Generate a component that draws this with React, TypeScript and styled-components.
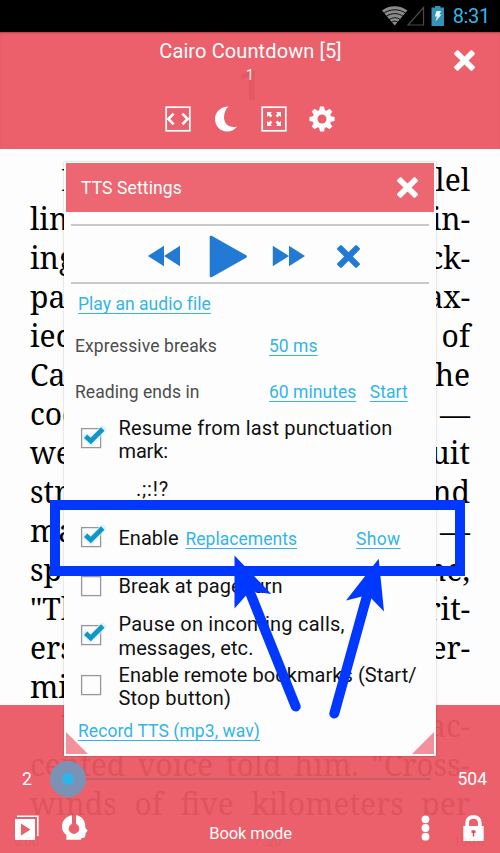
import React from 'react';
import styled, { createGlobalStyle } from 'styled-components';

const Global = createGlobalStyle`
  * { box-sizing: border-box; }
  body { margin: 0; background: #fdfdfd; font-family: Roboto, sans-serif; }
  svg { display: block; flex: none; }
`;

const Screen = styled.div`
  position: relative;
  width: 500px;
  height: 853px;
  overflow: hidden;
  background: #fdfdfd;
`;

/* ---------- status bar ---------- */

const StatusBar = styled.div`
  display: flex;
  align-items: center;
  justify-content: flex-end;
  height: 32px;
  padding-right: 10px;
  background: #000;
`;

const BatteryIcon = styled.svg`
  margin-left: 6px;
`;

const Clock = styled.span`
  margin-left: 8px;
  font-size: 20px;
  line-height: 32px;
  letter-spacing: -0.3px;
  color: #33b5e5;
`;

/* ---------- book page ---------- */

const Page = styled.main`
  display: flex;
  flex-direction: column;
  padding: 127.6px 30px 0;
  font-family: 'Noto Serif', 'DejaVu Serif Condensed', serif;
  font-size: 30px;
  color: #000;
`;

const Line = styled.div<{ $indent?: boolean }>`
  display: flex;
  flex: none;
  justify-content: space-between;
  height: 39px;
  line-height: 39px;
  padding-left: ${(p) => (p.$indent ? 31 : 0)}px;
  white-space: nowrap;
`;

/* ---------- reader bars ---------- */

const Bar = styled.section`
  position: absolute;
  left: 0;
  width: 500px;
  background: rgba(234, 87, 98, 0.95);
  color: #fff;
`;

const TopBar = styled(Bar)`
  top: 32px;
  height: 117px;
  display: grid;
  grid-template-columns: 70px 1fr 70px;
  box-shadow: inset 0 2px 2px -1px rgba(90, 20, 30, 0.4);
`;

const TitleColumn = styled.div`
  grid-column: 2;
  display: flex;
  flex-direction: column;
  align-items: center;
`;

const Title = styled.h1`
  margin: 7px 0 0 1px;
  font-size: 20px;
  font-weight: 400;
  line-height: 24px;
  letter-spacing: 0.115px;
`;

const Chapter = styled.div`
  position: relative;
  margin-top: 3px;
  font-size: 14px;
  line-height: 18px;
`;

const GhostChapter = styled.span`
  position: absolute;
  top: 0;
  left: -8px;
  font-size: 43px;
  font-weight: 700;
  line-height: 38px;
  color: rgba(150, 20, 40, 0.11);
`;

const ToolRow = styled.div`
  display: flex;
  justify-content: space-between;
  align-items: center;
  width: 171px;
  margin: 22px 0 0;
`;

const MoonIcon = styled.svg`
  margin: 0 -1px 0 1px;
`;

const FullscreenIcon = styled.svg`
  margin: 0 -1px 0 1px;
`;

const TopClose = styled.div`
  display: flex;
  justify-content: center;
  padding: 17.5px 1px 0 0;
`;

const BottomBar = styled(Bar)`
  top: 705px;
  height: 148px;
  display: flex;
  flex-direction: column;
  padding-top: 56px;
`;

const SliderRow = styled.div`
  display: flex;
  align-items: center;
  height: 36px;
  padding: 0 13px 0 22px;
  font-size: 17.5px;
  line-height: 20px;
`;

const Track = styled.div`
  display: flex;
  align-items: center;
  flex: 1;
  margin: 0 26px 0 18px;
`;

const Knob = styled.div`
  display: flex;
  align-items: center;
  justify-content: center;
  width: 36px;
  height: 36px;
  border-radius: 50%;
  background: #7c92b4;
  &::after {
    content: '';
    width: 12px;
    height: 12px;
    border-radius: 50%;
    background: #2fb4ea;
  }
`;

const Rail = styled.div`
  flex: 1;
  height: 1.5px;
  background: #c95b67;
`;

const BottomTools = styled.div`
  display: grid;
  grid-template-columns: 1fr auto 1fr;
  align-items: start;
  height: 30px;
  margin-top: 18px;
  padding: 0 16px 0 15px;
`;

const ToolGroup = styled.div<{ $end?: boolean; $gap: number }>`
  display: flex;
  align-items: center;
  gap: ${(p) => p.$gap}px;
  justify-content: ${(p) => (p.$end ? 'flex-end' : 'flex-start')};
`;

const Mode = styled.span`
  padding: 9px 0 0 2px;
  font-size: 16.5px;
  line-height: 20px;
  letter-spacing: -0.1px;
`;

const Footer = styled.div`
  position: absolute;
  left: 0;
  bottom: 4px;
  width: 500px;
  display: flex;
  justify-content: space-between;
  padding: 0 15px 0 14px;
  font-size: 13px;
  line-height: 15px;
  color: rgba(120, 20, 30, 0.09);
`;

const FooterGroup = styled.span`
  margin-left: 42px;
`;

/* ---------- dialog ---------- */

const Dialog = styled.section`
  position: absolute;
  left: 64px;
  top: 162px;
  width: 372px;
  height: 594px;
  display: flex;
  flex-direction: column;
  padding: 1px 2px 2px;
  background: #fdfdfd;
  box-shadow: 0 0 2px rgba(0, 0, 0, 0.25);
`;

const DialogHeader = styled.header`
  display: flex;
  align-items: center;
  justify-content: space-between;
  flex: none;
  height: 49px;
  padding: 0 16px 0 15px;
  background: #ec6772;
  color: #fff;
  font-size: 17.5px;
  letter-spacing: 0.12px;
`;

const Player = styled.div`
  display: flex;
  align-items: center;
  flex: none;
  height: 60px;
  margin: 12px 5px 0;
  padding: 4px 0 0 76px;
  border-top: 2px solid #cacaca;
  border-bottom: 2px solid #cacaca;
`;

const Spacer = styled.span<{ $w: number }>`
  width: ${(p) => p.$w}px;
`;

const Row = styled.div<{ $h: number; $left?: number }>`
  display: flex;
  align-items: center;
  flex: none;
  height: ${(p) => p.$h}px;
  padding-left: ${(p) => p.$left ?? 9}px;
  font-size: 17.5px;
  line-height: 20px;
`;

const Label = styled.span<{ $ls: number }>`
  width: 194px;
  color: #4c4c4c;
  letter-spacing: ${(p) => p.$ls}px;
`;

const Link = styled.a<{ $ls?: number; $ml?: number }>`
  margin-left: ${(p) => p.$ml ?? 0}px;
  color: #33b5e5;
  letter-spacing: ${(p) => p.$ls ?? 0.03}px;
  text-decoration: underline;
  text-decoration-thickness: 1px;
  text-underline-offset: 2.5px;
  text-decoration-skip-ink: none;
`;

const CheckRow = styled(Row)`
  padding-left: 14px;
  font-size: 20px;
  line-height: 23.5px;
  color: #111;
`;

const CheckText = styled.div`
  display: flex;
  flex-direction: column;
  margin-left: 11.5px;
`;

const TextLine = styled.span<{ $ls?: number }>`
  letter-spacing: ${(p) => p.$ls ?? 0}px;
  white-space: nowrap;
`;

const SmallLink = styled(Link)`
  padding-top: 3px;
  font-size: 17.5px;
`;

const CheckSvg = styled.svg<{ $dy: number }>`
  margin: 0 0 ${(p) => -2 * p.$dy}px;
`;

const Corner = styled.i<{ $right?: boolean }>`
  position: absolute;
  bottom: 2px;
  ${(p) => (p.$right ? 'right: 2px;' : 'left: 2px;')}
  width: 22px;
  height: 22px;
  background: #f3909a;
  clip-path: ${(p) => (p.$right ? 'polygon(100% 0, 100% 100%, 0 100%)' : 'polygon(0 0, 100% 100%, 0 100%)')};
`;

/* ---------- annotation ---------- */

const Highlight = styled.div`
  position: absolute;
  left: 50px;
  top: 500px;
  width: 415px;
  height: 76px;
  border: 10px solid #0038ff;
`;

const Arrows = styled.svg`
  position: absolute;
  left: 220px;
  top: 550px;
`;

/* ---------- icons ---------- */

function Cross({ size, color }: { size: number; color: string }) {
  return (
    <svg width={size} height={size} viewBox="-10 -10 20 20" fill={color}>
      <rect x="-12" y="-2.7" width="24" height="5.4" rx="1.1" transform="rotate(45)" />
      <rect x="-12" y="-2.7" width="24" height="5.4" rx="1.1" transform="rotate(-45)" />
    </svg>
  );
}

function Check({ on = false, dy = 0 }: { on?: boolean; dy?: number }) {
  return (
    <CheckSvg $dy={dy} width="27" height="26" viewBox="0 0 27 26">
      <rect x="1.6" y="3.6" width="19" height="19" fill="#fdfdfd" stroke="#989898" strokeWidth="1.3" />
      {on && (
        <>
          <path d="M6 12.2L10.8 16.8L22.5 4.4" fill="none" stroke="#c9ecf8" strokeWidth="7.5" opacity="0.6" strokeLinecap="round" strokeLinejoin="round" />
          <path d="M5.6 11.2L10.8 16L22.8 4" fill="none" stroke="#1296c6" strokeWidth="4.7" />
        </>
      )}
    </CheckSvg>
  );
}

const bookLines: { l: string; r?: string; indent?: boolean }[] = [
  { l: 'I', r: 'lel', indent: true },
  { l: 'lin', r: 'in-' },
  { l: 'ing', r: 'ck-' },
  { l: 'pa', r: 'ax-' },
  { l: 'ied', r: 'of' },
  { l: 'Ca', r: 'the' },
  { l: 'coo', r: '—' },
  { l: 'we', r: 'uit' },
  { l: 'str', r: 'and' },
  { l: 'ma', r: '—' },
  { l: 'sp', r: 'me,' },
  { l: '"Th', r: 'rit-' },
  { l: 'ers', r: 'er-' },
  { l: 'mi' },
  { l: 'V', r: 'ac-', indent: true },
];

function TopIcons() {
  return (
    <ToolRow>
      <svg width="26" height="26" viewBox="0 0 26 26" fill="none" stroke="#fff">
        <rect x="1.2" y="1.2" width="23.6" height="23.6" strokeWidth="1.7" />
        <path d="M8.6 7.6L3.4 13L8.6 18.4M17.4 7.6L22.6 13L17.4 18.4" strokeWidth="2.6" />
      </svg>
      <MoonIcon width="22" height="26" viewBox="0 0 22 26" fill="#fff">
        <path d="M13.5 .4C5.6 .4 0 6 0 13C0 20 5.5 25.5 12 25.5C16.5 25.5 20 23.5 22 20.5C15 22.5 9.2 18.5 9 11.5C8.9 7 10.8 2.8 13.5 .4Z" />
      </MoonIcon>
      <FullscreenIcon width="26" height="26" viewBox="0 0 26 26" fill="#fff">
        <rect x="1.2" y="1.2" width="23.6" height="23.6" fill="none" stroke="#fff" strokeWidth="1.7" />
        <path d="M6 6H11L9.4 7.6L11.4 9.6L9.6 11.4L7.6 9.4L6 11ZM20 6V11L18.4 9.4L16.4 11.4L14.6 9.6L16.6 7.6L15 6ZM6 20V15L7.6 16.6L9.6 14.6L11.4 16.4L9.4 18.4L11 20ZM20 20H15L16.6 18.4L14.6 16.4L16.4 14.6L18.4 16.6L20 15Z" />
      </FullscreenIcon>
      <svg width="26" height="26" viewBox="-13 -13 26 26">
        <g fill="#fff">
          {[0, 45, 90, 135].map((a) => (
            <path key={a} transform={`rotate(${a})`} d="M-3 -8L-2 -12.6H2L3 -8V8L2 12.6H-2L-3 8Z" />
          ))}
          <circle r="9.3" />
        </g>
        <circle r="4.5" fill="#eb5f6a" />
      </svg>
    </ToolRow>
  );
}

export default function App() {
  return (
    <>
      <Global />
      <Screen>
        <StatusBar>
          <svg width="43" height="20" viewBox="0 0 43 20">
            <path d="M0 4.6C7 -1.2 18 -1.2 25.4 4.6L12.7 19.5Z" fill="#8a8a8a" />
            <path d="M1.5 7.4C8 2.6 17.5 2.6 24 7.4M4 10.6C9 6.6 16.5 6.6 21.4 10.6M7 13.8C10.5 11 15 11 18.5 13.8M9.3 16.4C11.5 14.7 14 14.7 16.2 16.4" fill="none" stroke="#000" strokeWidth="0.9" />
            <path d="M26 19L41.5 1.5V19Z" fill="none" stroke="#4a4a4a" strokeWidth="1.2" />
          </svg>
          <BatteryIcon width="14" height="20" viewBox="0 0 14 20">
            <path d="M4 0H9.5V1.5H13V20H.5V1.5H4Z" fill="#3593ba" />
            <path d="M5.5 5H10L8.5 8.6H10.5L4.5 15.5L6 10.6H3.8Z" fill="#e8f6fb" />
          </BatteryIcon>
          <Clock>8:31</Clock>
        </StatusBar>

        <Page>
          {bookLines.map((b, i) => (
            <Line key={i} $indent={b.indent}>
              <span>{b.l}</span>
              <span>{b.r}</span>
            </Line>
          ))}
          <Line>
            <span>cented</span>
            <span>voice</span>
            <span>told</span>
            <span>him.</span>
            <span>"Cross-</span>
          </Line>
          <Line>
            <span>winds</span>
            <span>of</span>
            <span>five</span>
            <span>kilometers</span>
            <span>per</span>
          </Line>
        </Page>

        <TopBar>
          <TitleColumn>
            <Title>Cairo Countdown [5]</Title>
            <Chapter>
              <GhostChapter>1</GhostChapter>1
            </Chapter>
            <TopIcons />
          </TitleColumn>
          <TopClose>
            <Cross size={21} color="#fff" />
          </TopClose>
        </TopBar>

        <BottomBar>
          <SliderRow>
            <span>2</span>
            <Track>
              <Knob />
              <Rail />
            </Track>
            <span>504</span>
          </SliderRow>
          <BottomTools>
            <ToolGroup $gap={23}>
              <svg width="24" height="25" viewBox="0 0 24 25">
                <path d="M2 1.2H22.8V21" fill="none" stroke="#fff" strokeWidth="1.6" />
                <rect x="0" y="4" width="20" height="21" fill="#fff" />
                <path d="M6 8.5L15.5 14.5L6 20.5Z" fill="#eb5f6a" />
              </svg>
              <svg width="26" height="25" viewBox="0 0 78 75" fill="#fff">
                <path d="M30 1C12 4 0 18 0 35C0 48 7 54 13 60V74H57C58 66 68 72 70 64L71 54L77 47L70 38C72 18 58 2 42 1V26a16 16 0 1 1 -12 0Z" />
              </svg>
            </ToolGroup>
            <Mode>Book mode</Mode>
            <ToolGroup $end $gap={33.5}>
              <svg width="9" height="26" viewBox="0 0 9 26" fill="#fff">
                <circle cx="4.5" cy="4.3" r="3.9" />
                <circle cx="4.5" cy="13" r="3.9" />
                <circle cx="4.5" cy="21.7" r="3.9" />
              </svg>
              <svg width="21" height="26" viewBox="0 0 21 26">
                <path d="M4.2 12V7.5C4.2 0 16.8 0 16.8 7.5V12" fill="none" stroke="#fff" strokeWidth="3.7" />
                <rect x="0.3" y="11" width="20.4" height="15" fill="#fff" />
                <path d="M8.5 15.2H12.5V18H11.3V21.5H9.7V18H8.5Z" fill="#d9525f" />
              </svg>
            </ToolGroup>
          </BottomTools>
          <Footer>
            <span>0:00</span>
            <FooterGroup>7&nbsp; 20</FooterGroup>
            <span>100%</span>
          </Footer>
        </BottomBar>

        <Dialog>
          <DialogHeader>
            <span>TTS Settings</span>
            <Cross size={21} color="#fff" />
          </DialogHeader>
          <Player>
            <svg width="34" height="22" viewBox="0 0 34 22" fill="#237ad4">
              <path d="M.8 11L17 .8V21.2ZM17 11L33 .8V21.2Z" />
            </svg>
            <Spacer $w={28} />
            <svg width="38" height="43" viewBox="0 0 38 43">
              <path d="M2 2L36.5 21.5L2 41Z" fill="#237ad4" stroke="#237ad4" strokeWidth="2.6" strokeLinejoin="round" />
            </svg>
            <Spacer $w={24.5} />
            <svg width="34" height="22" viewBox="0 0 34 22" fill="#237ad4">
              <path d="M33 11L17 .8V21.2ZM17 11L.8 .8V21.2Z" />
            </svg>
            <Spacer $w={31} />
            <Cross size={23} color="#237ad4" />
          </Player>

          <Row $h={40} $left={12}>
            <Link>Play an audio file</Link>
          </Row>
          <Row $h={44}>
            <Label $ls={0.11}>Expressive breaks</Label>
            <Link>50 ms</Link>
          </Row>
          <Row $h={47}>
            <Label $ls={0.06}>Reading ends in</Label>
            <Link>60 minutes</Link>
            <Link $ml={13.5}>Start</Link>
          </Row>
          <CheckRow $h={50}>
            <Check on dy={-2} />
            <CheckText>
              <TextLine $ls={0.2}>Resume from last punctuation</TextLine>
              <TextLine $ls={-0.15}>mark:</TextLine>
            </CheckText>
          </CheckRow>
          <CheckRow $h={49}>
            <Spacer $w={56} />
            <TextLine $ls={0.8}>.;:!?</TextLine>
          </CheckRow>
          <CheckRow $h={49}>
            <Check on dy={-2} />
            <CheckText>
              <TextLine>Enable</TextLine>
            </CheckText>
            <SmallLink $ml={7}>Replacements</SmallLink>
            <SmallLink $ml={59} $ls={0.35}>Show</SmallLink>
          </CheckRow>
          <CheckRow $h={47}>
            <Check dy={-1} />
            <CheckText>
              <TextLine $ls={0.1}>Break at page turn</TextLine>
            </CheckText>
          </CheckRow>
          <CheckRow $h={53}>
            <Check on dy={-2} />
            <CheckText>
              <TextLine $ls={0.24}>Pause on incoming calls,</TextLine>
              <TextLine $ls={0.1}>messages, etc.</TextLine>
            </CheckText>
          </CheckRow>
          <CheckRow $h={48}>
            <Check dy={-2} />
            <CheckText>
              <TextLine $ls={0.06}>Enable remote bookmarks (Start/</TextLine>
              <TextLine $ls={0.2}>Stop button)</TextLine>
            </CheckText>
          </CheckRow>
          <Row $h={40} $left={12}>
            <Link $ls={0.08}>Record TTS (mp3, wav)</Link>
          </Row>
          <Corner />
          <Corner $right />
        </Dialog>

        <Highlight />
        <Arrows width="180" height="180" viewBox="220 550 180 180" fill="#0038ff">
          <path d="M249 590L295.7 706.5M367.5 594L334.3 713.5" stroke="#0038ff" strokeWidth="10" strokeLinecap="round" />
          <path d="M234.5 555.5L271.3 594L250 591L234.5 608.5Z" />
          <path d="M378.7 558.7L384 611.5L368 595L346 600.5Z" />
        </Arrows>
      </Screen>
    </>
  );
}
